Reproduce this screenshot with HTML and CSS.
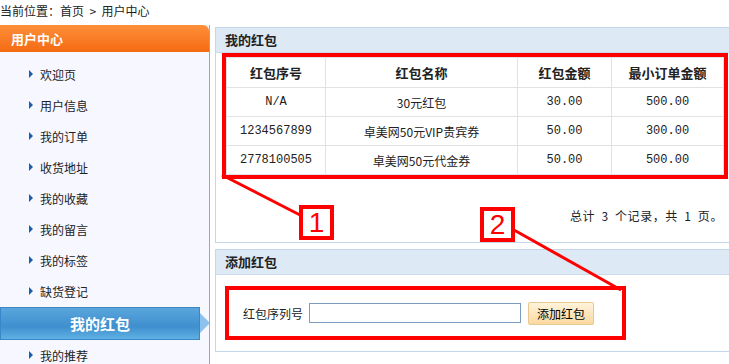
FILE: index.html
```html
<!DOCTYPE html>
<html lang="zh-CN">
<head>
    <meta charset="UTF-8">
    <title>我的红包 - 用户中心</title>
    <link rel="stylesheet" href="styles.css">
</head>
<body>
    <div class="crumb">当前位置：首页 &nbsp;&gt;&nbsp; 用户中心</div>
    <div class="wrap">
        <div class="side">
            <div class="side-head">用户中心</div>
            <ul class="menu">
                <li>欢迎页</li>
                <li>用户信息</li>
                <li>我的订单</li>
                <li>收货地址</li>
                <li>我的收藏</li>
                <li>我的留言</li>
                <li>我的标签</li>
                <li>缺货登记</li>
                <li class="active">我的红包</li>
                <li>我的推荐</li>
            </ul>
        </div>
        <div class="main">
            <div class="panel panel-list">
                <div class="panel-head">我的红包</div>
                <div class="mark-box table-box">
                    <table class="bonus">
                        <tr><th class="c1">红包序号</th><th class="c2">红包名称</th><th class="c3">红包金额</th><th class="c4">最小订单金额</th></tr>
                        <tr><td class="mono">N/A</td><td>30元红包</td><td class="mono">30.00</td><td class="mono">500.00</td></tr>
                        <tr><td class="mono">1234567899</td><td>卓美网50元VIP贵宾券</td><td class="mono">50.00</td><td class="mono">300.00</td></tr>
                        <tr><td class="mono">2778100505</td><td>卓美网50元代金券</td><td class="mono">50.00</td><td class="mono">500.00</td></tr>
                    </table>
                </div>
                <div class="pager">总计 3 个记录，共 1 页。</div>
            </div>
            <div class="panel panel-add">
                <div class="panel-head">添加红包</div>
                <div class="mark-box form-box">
                    <label for="sn">红包序列号</label>
                    <input type="text" id="sn">
                    <button class="btn">添加红包</button>
                </div>
            </div>
        </div>
    </div>

    <div class="tag tag1">1</div>
    <div class="tag tag2">2</div>
    <svg class="leaders" width="729" height="364" viewBox="0 0 729 364">
        <line x1="222" y1="175" x2="300" y2="215" stroke="#f00" stroke-width="3"/>
        <line x1="514" y1="230" x2="621" y2="290" stroke="#f00" stroke-width="3"/>
    </svg>
</body>
</html>
```

FILE: styles.css
```css
body {
    margin: 0;
    font-family: "Noto Sans CJK SC", "Liberation Sans", sans-serif;
    font-size: 12px;
    color: #222;
    background: #fff;
    overflow: hidden;
    position: relative;
    width: 729px;
    height: 364px;
}
.crumb {
    height: 25px;
    line-height: 22px;
}
.wrap {
    display: flex;
}
.side {
    width: 209px;
    height: 340px;
    border-right: 1px solid #86aebf;
    background: #f7f7ff;
}
.side-head {
    height: 27px;
    line-height: 27px;
    padding-left: 11px;
    color: #fff;
    font-weight: bold;
    font-size: 13px;
    background: linear-gradient(#ff8f3a, #f46a12);
    border-radius: 0 6px 0 0;
}
.menu {
    list-style: none;
    margin: 0;
    padding: 7px 0 0;
}
.menu li {
    height: 31px;
    line-height: 31px;
    padding-left: 40px;
    position: relative;
}
.menu li::before {
    content: "";
    position: absolute;
    left: 29px;
    top: 11px;
    border-left: 4px solid #1a5fa8;
    border-top: 4px solid transparent;
    border-bottom: 4px solid transparent;
}
.menu li.active {
    width: 198px;
    padding: 0;
    text-align: center;
    color: #fff;
    font-weight: bold;
    font-size: 15px;
    background: linear-gradient(#5aa6dc, #3f8fcf 60%, #5fb0e2);
    border: 1px solid #3a86c8;
}
.menu li.active::before {
    left: auto;
    right: -11px;
    top: 5px;
    border-left: 10px solid #8cc2ec;
    border-top: 10px solid transparent;
    border-bottom: 10px solid transparent;
}
.main {
    flex: 1;
    margin-left: 5px;
}
.panel {
    border: 1px solid #c3d6ea;
    border-right: none;
    margin-bottom: 6px;
}
.panel-head {
    height: 24px;
    line-height: 24px;
    padding-left: 9px;
    font-weight: bold;
    font-size: 13px;
    background: #dde9f5;
    border-bottom: 1px solid #c9dbed;
}
.panel-list {
    height: 214px;
    margin-top: 2px;
}
.mark-box {
    border: 4px solid #f00;
}
.table-box {
    margin: 0 1px 0 6px;
}
.bonus {
    width: 100%;
    border-collapse: collapse;
}
.bonus th, .bonus td {
    border: 1px solid #e2e2e2;
    text-align: center;
    padding: 0;
}
.bonus th {
    height: 29px;
    font-size: 13px;
}
.bonus td {
    height: 28px;
}
.bonus .c1 { width: 98px; }
.bonus .c2 { width: 191px; }
.bonus .c3 { width: 93px; }
.mono {
    font-family: "Liberation Mono", "DejaVu Sans Mono", monospace;
    font-size: 12px;
}
.pager {
    text-align: right;
    padding: 28px 6px 0 0;
    letter-spacing: 0.6px;
    word-spacing: 3px;
}
.panel-add {
    height: 101px;
}
.form-box {
    width: 379px;
    height: 46px;
    margin: 11px 0 0 9px;
    display: flex;
    align-items: center;
    padding-left: 14px;
}
.form-box label {
    margin-right: 6px;
}
.form-box input {
    width: 206px;
    height: 16px;
    border: 1px solid #7a9cc0;
    padding: 1px 2px;
    margin: 0;
}
.btn {
    margin-left: 7px;
    height: 23px;
    padding: 0 8px;
    font-family: inherit;
    font-size: 12px;
    border: 1px solid #e6c98e;
    border-radius: 2px;
    background: linear-gradient(#fff3db, #fbd9a0);
}
.tag {
    position: absolute;
    width: 27px;
    height: 27px;
    border: 4px solid #f00;
    background: #fff;
    color: #f00;
    font-size: 28px;
    line-height: 27px;
    text-align: center;
    font-family: "Liberation Sans", sans-serif;
    z-index: 2;
}
.tag1 { left: 299px; top: 205px; }
.tag2 { left: 480px; top: 207px; }
.leaders {
    position: absolute;
    left: 0;
    top: 0;
    pointer-events: none;
    z-index: 1;
}
```
